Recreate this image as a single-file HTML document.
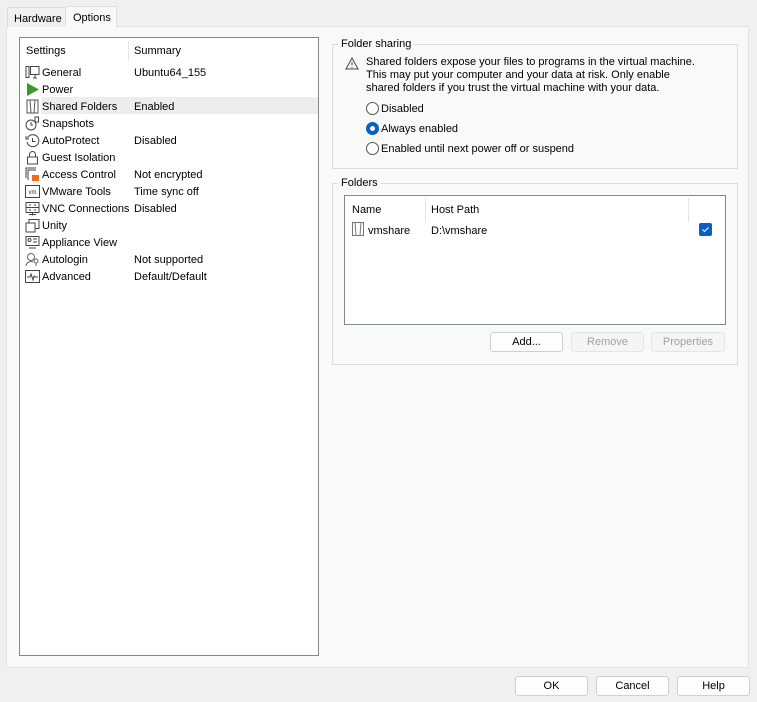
<!DOCTYPE html>
<html><head><style>
*{margin:0;padding:0;box-sizing:border-box}
body{width:757px;height:702px;background:#f0f0f0;font-family:"Liberation Sans",sans-serif;font-size:11px;color:#000;position:relative;overflow:hidden}
.a{position:absolute;white-space:nowrap}
.panel{position:absolute;left:6px;top:26px;width:743px;height:642px;background:#f9f9f9;border:1px solid #e3e3e3}
.tab{position:absolute;border:1px solid #dcdcdc;border-bottom:none}
.list{position:absolute;left:19px;top:37px;width:300px;height:619px;background:#fff;border:1px solid #828790}
.grp{position:absolute;border:1px solid #dcdcdc}
.btn{position:absolute;background:#fdfdfd;border:1px solid #d0d0d0;border-radius:3px;text-align:center;line-height:18px;height:20px}
.dis{background:#f5f5f5;color:#a0a0a0;border-color:#e5e5e5}
.ic{position:absolute;left:5px;width:15px;height:15px}
.radio{position:absolute;width:13px;height:13px;border:1px solid #555;border-radius:50%;background:#fff}
</style></head><body>
<div class="panel"></div>
<div class="tab a" style="left:7px;top:7px;width:59px;height:20px;background:#f0f0f0;padding:5px 0 0 6px">Hardware</div>
<div class="tab a" style="left:65px;top:6px;width:52px;height:21px;background:#f9f9f9;padding:5px 0 0 7px;border-color:#e0e0e0">Options</div>

<div class="list">
 <div class="a" style="left:108px;top:3px;width:1px;height:20px;background:#e5e5e5"></div>
 <div class="a" style="left:6px;top:7px">Settings</div>
 <div class="a" style="left:114px;top:7px">Summary</div>
 <div class="a" style="left:21px;top:59px;width:277px;height:17px;background:#ededed"></div>
 <div style="position:absolute;left:0;top:27px;width:298px">
  <svg class="ic" style="top:0" viewBox="0 0 15 15" fill="none" stroke="#444"><rect x="1" y="1.5" width="3" height="11"/><rect x="5.5" y="1.5" width="8.5" height="8"/><path d="M8 13h4M10 10v3"/></svg>
  <svg class="ic" style="top:17px" viewBox="0 0 15 15"><path d="M2 1l12 6.5L2 14z" fill="#3a9a2a"/></svg>
  <svg class="ic" style="top:34px" viewBox="0 0 15 15" fill="none" stroke="#555"><path d="M2 1h11v13H2zM5 1l1 13M10 1l-1 13"/></svg>
  <svg class="ic" style="top:51px" viewBox="0 0 15 15" fill="none" stroke="#444"><circle cx="6" cy="9" r="5"/><path d="M6 6v3h2"/><rect x="10" y="1" width="3.5" height="5"/></svg>
  <svg class="ic" style="top:68px" viewBox="0 0 15 15" fill="none" stroke="#444"><path d="M2.5 5A6 6 0 1 1 2 9"/><path d="M1 3v3h3M7.5 5v3.5h3"/></svg>
  <svg class="ic" style="top:85px" viewBox="0 0 15 15" fill="none" stroke="#444"><rect x="2.5" y="7" width="10" height="7"/><path d="M4.5 7V4.5a3 3 0 0 1 6 0V7"/></svg>
  <svg class="ic" style="top:102px" viewBox="0 0 15 15" fill="none" stroke="#444"><path d="M1 11V1h10"/><path d="M3 13V3h8"/><rect x="7" y="8" width="7" height="6" fill="#f06a1c" stroke="none"/></svg>
  <svg class="ic" style="top:119px" viewBox="0 0 15 15"><rect x=".5" y="1.5" width="14" height="12" fill="none" stroke="#444"/><text x="7.5" y="10" font-size="6" text-anchor="middle" fill="#333" font-family="Liberation Sans">vm</text></svg>
  <svg class="ic" style="top:136px" viewBox="0 0 15 15" fill="none" stroke="#444"><rect x="1" y="1.5" width="13" height="10"/><path d="M1 6.5h13M7.5 11.5v3M4 13.5h7M4 4h2M9 4h2M4 9h2M9 9h2"/></svg>
  <svg class="ic" style="top:153px" viewBox="0 0 15 15" fill="none" stroke="#444"><rect x="1" y="5" width="9" height="9"/><path d="M4 5V1.5h10v9h-4"/></svg>
  <svg class="ic" style="top:170px" viewBox="0 0 15 15" fill="none" stroke="#444"><rect x="1" y="1.5" width="13" height="9"/><circle cx="4.5" cy="5" r="1.5"/><path d="M8 4h4M8 7h4M4 13h7"/></svg>
  <svg class="ic" style="top:187px" viewBox="0 0 15 15" fill="none" stroke="#666"><circle cx="6" cy="5" r="3.5"/><path d="M1 14a5 5 0 0 1 7-4"/><circle cx="11" cy="9" r="2"/><path d="M11 11v3"/></svg>
  <svg class="ic" style="top:204px" viewBox="0 0 15 15" fill="none" stroke="#444"><rect x=".5" y="1.5" width="14" height="12"/><path d="M2 8h3l1-3 2 6 1-4 1 1h3"/></svg>
  <div class="a" style="left:22px;top:2px">General</div><div class="a" style="left:114px;top:2px">Ubuntu64_155</div>
  <div class="a" style="left:22px;top:19px">Power</div>
  <div class="a" style="left:22px;top:36px">Shared Folders</div><div class="a" style="left:114px;top:36px">Enabled</div>
  <div class="a" style="left:22px;top:53px">Snapshots</div>
  <div class="a" style="left:22px;top:70px">AutoProtect</div><div class="a" style="left:114px;top:70px">Disabled</div>
  <div class="a" style="left:22px;top:87px">Guest Isolation</div>
  <div class="a" style="left:22px;top:104px">Access Control</div><div class="a" style="left:114px;top:104px">Not encrypted</div>
  <div class="a" style="left:22px;top:121px">VMware Tools</div><div class="a" style="left:114px;top:121px">Time sync off</div>
  <div class="a" style="left:22px;top:138px">VNC Connections</div><div class="a" style="left:114px;top:138px">Disabled</div>
  <div class="a" style="left:22px;top:155px">Unity</div>
  <div class="a" style="left:22px;top:172px">Appliance View</div>
  <div class="a" style="left:22px;top:189px">Autologin</div><div class="a" style="left:114px;top:189px">Not supported</div>
  <div class="a" style="left:22px;top:206px">Advanced</div><div class="a" style="left:114px;top:206px">Default/Default</div>
 </div>
</div>

<div class="grp" style="left:332px;top:44px;width:406px;height:125px"></div>
<div class="a" style="left:338px;top:38px;background:#f9f9f9;padding:0 3px">Folder sharing</div>
<svg class="a" style="left:345px;top:57px" width="14" height="13" viewBox="0 0 14 13" fill="none" stroke="#444"><path d="M7 1L1 12h12z"/><path d="M7 5v3.5M7 10v1"/></svg>
<div class="a" style="left:366px;top:56px;line-height:13px">Shared folders expose your files to programs in the virtual machine.<br>This may put your computer and your data at risk. Only enable<br>shared folders if you trust the virtual machine with your data.</div>
<div class="radio" style="left:366px;top:102px"></div><div class="a" style="left:381px;top:103px">Disabled</div>
<div class="radio" style="left:366px;top:122px;background:#fff;border:4px solid #0a5fc4"></div><div class="a" style="left:381px;top:123px">Always enabled</div>
<div class="radio" style="left:366px;top:142px"></div><div class="a" style="left:381px;top:143px">Enabled until next power off or suspend</div>

<div class="grp" style="left:332px;top:183px;width:406px;height:182px"></div>
<div class="a" style="left:338px;top:177px;background:#f9f9f9;padding:0 3px">Folders</div>
<div class="a" style="left:344px;top:195px;width:382px;height:130px;background:#fff;border:1px solid #828790">
 <div class="a" style="left:80px;top:2px;width:1px;height:24px;background:#e5e5e5"></div>
 <div class="a" style="left:343px;top:2px;width:1px;height:24px;background:#e5e5e5"></div>
 <div class="a" style="left:7px;top:8px">Name</div>
 <div class="a" style="left:86px;top:8px">Host Path</div>
 <svg class="a" style="left:7px;top:26px" width="12" height="14" viewBox="0 0 12 14" fill="none" stroke="#777"><path d="M.5 .5h11v13H.5zM3 .5l1 13M9 .5l-1 13"/></svg>
 <div class="a" style="left:23px;top:29px">vmshare</div>
 <div class="a" style="left:86px;top:29px">D:\vmshare</div>
 <div class="a" style="left:354px;top:27px;width:13px;height:13px;background:#0a5fc4;border-radius:2px"><svg width="13" height="13"><path d="M3.5 6.5l2 2 4-4" stroke="#fff" fill="none"/></svg></div>
</div>
<div class="btn" style="left:490px;top:332px;width:73px">Add...</div>
<div class="btn dis" style="left:571px;top:332px;width:73px">Remove</div>
<div class="btn dis" style="left:651px;top:332px;width:74px">Properties</div>

<div class="btn" style="left:515px;top:676px;width:73px">OK</div>
<div class="btn" style="left:596px;top:676px;width:73px">Cancel</div>
<div class="btn" style="left:677px;top:676px;width:73px">Help</div>
</body></html>
